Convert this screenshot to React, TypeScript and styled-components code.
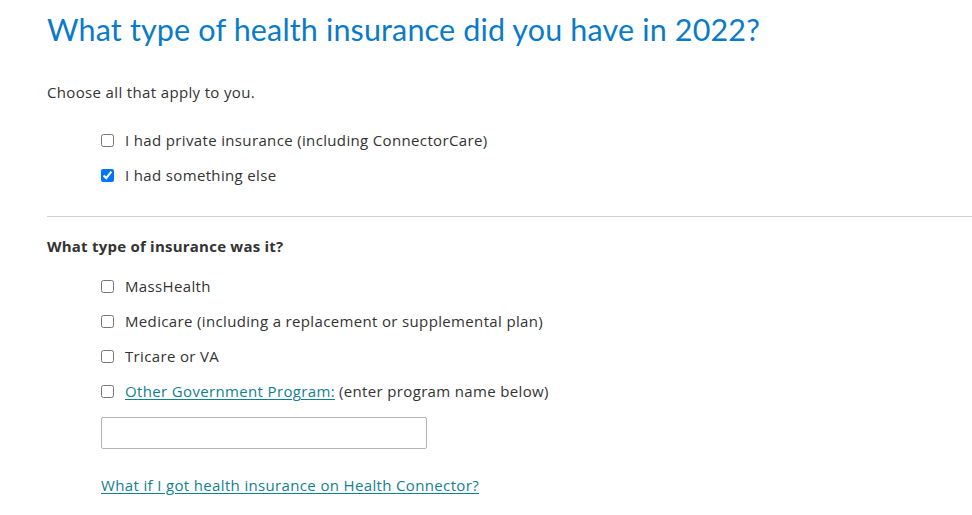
import React from "react";
import styled, { createGlobalStyle } from "styled-components";

const GlobalStyle = createGlobalStyle`
  body {
    margin: 0;
    background: #fff;
    font-family: "Open Sans", "Noto Sans", sans-serif;
    color: #333;
    letter-spacing: 0.35px;
  }
`;

const Page = styled.main`
  padding: 9px 0 0 47px;
`;

const Title = styled.h1`
  margin: 0;
  font-family: "Lato", "Noto Sans", sans-serif;
  font-weight: 400;
  font-size: 30.5px;
  line-height: 40px;
  color: #0a7bc8;
  letter-spacing: 0.15px;
`;

const Intro = styled.p`
  margin: 33px 0 0;
  font-size: 15px;
  line-height: 20px;
`;

const OptionList = styled.ul<{ top: number }>`
  list-style: none;
  margin: ${(p) => p.top}px 0 0;
  padding: 0 0 0 54px;
  display: flex;
  flex-direction: column;
  gap: 15px;
`;

const OptionRow = styled.li`
  display: flex;
  align-items: center;
  gap: 11px;
  height: 20px;
  font-size: 15px;
  color: #333;
`;

const Check = styled.input.attrs({ type: "checkbox" })`
  margin: 0;
  width: 13px;
  height: 13px;
  accent-color: #0075ff;
`;

const Divider = styled.hr`
  margin: 31px 0 0;
  border: none;
  border-top: 1px solid #d0d0d0;
`;

const SubHeading = styled.h2`
  margin: 19px 0 0;
  font-size: 15px;
  line-height: 20px;
  font-weight: 700;
  letter-spacing: 0.23px;
  color: #333;
`;

const TextLink = styled.a`
  color: #12818f;
  text-decoration: underline;
  text-underline-offset: 2px;
`;

const Trailing = styled.span`
  margin-left: 4px;
`;

const ProgramInput = styled.input`
  display: block;
  margin: 16px 0 0 54px;
  width: 326px;
  height: 32px;
  box-sizing: border-box;
  border: 1px solid #b5b5b5;
  border-radius: 2px;
  padding: 0 8px;
`;

const HelpLink = styled(TextLink)`
  display: inline-block;
  margin: 26px 0 0 54px;
  font-size: 15px;
  line-height: 20px;
`;

const firstOptions = [
  { label: "I had private insurance (including ConnectorCare)", checked: false },
  { label: "I had something else", checked: true },
];

const typeOptions = [
  "MassHealth",
  "Medicare (including a replacement or supplemental plan)",
  "Tricare or VA",
];

export default function App() {
  return (
    <>
      <GlobalStyle />
      <Page>
        <Title>What type of health insurance did you have in 2022?</Title>
        <Intro>Choose all that apply to you.</Intro>
        <OptionList top={28}>
          {firstOptions.map((o) => (
            <OptionRow key={o.label}>
              <Check defaultChecked={o.checked} />
              <span>{o.label}</span>
            </OptionRow>
          ))}
        </OptionList>
        <Divider />
        <SubHeading>What type of insurance was it?</SubHeading>
        <OptionList top={20}>
          {typeOptions.map((label) => (
            <OptionRow key={label}>
              <Check />
              <span>{label}</span>
            </OptionRow>
          ))}
          <OptionRow>
            <Check />
            <span>
              <TextLink href="#">Other Government Program:</TextLink>
              <Trailing>(enter program name below)</Trailing>
            </span>
          </OptionRow>
        </OptionList>
        <ProgramInput type="text" />
        <HelpLink href="#">What if I got health insurance on Health Connector?</HelpLink>
      </Page>
    </>
  );
}
